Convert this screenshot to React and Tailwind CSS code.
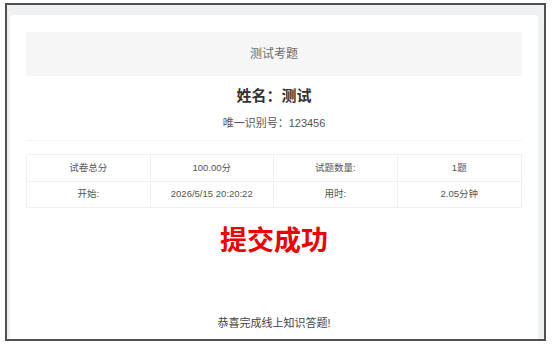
import React from 'react';

const rows = [
  ['试卷总分', '100.00分', '试题数量:', '1题'],
  ['开始:', '2026/5/15 20:20:22', '用时:', '2.05分钟'],
];

const App = () => {
  return (
    <div
      className="w-[553px] h-[346px] bg-white pt-[3px] pl-[5px] overflow-hidden"
      style={{ fontFamily: '"Liberation Sans", "Noto Sans CJK SC", sans-serif' }}
    >
      <div className="w-[541px] h-[338px] border-2 border-[#505050] bg-[#eef0f2] pt-[10px] pl-[3px] pr-[6px] flex">
        <div className="flex-1 bg-white rounded-t-[3px] pt-[17px] px-[16px] flex flex-col">
          {/* title bar */}
          <div className="h-[44px] bg-[#f6f6f6] flex items-center justify-center text-[12px] text-[#6b6b6b]">
            测试考题
          </div>

          <div className="mt-[10px] h-[20px] flex items-center justify-center text-[15px] font-bold text-[#333]">
            姓名：测试
          </div>
          <div className="mt-[9px] h-[16px] flex items-center justify-center text-[11px] text-[#555]">
            唯一识别号：123456
          </div>

          <div className="mt-[9px] border-t border-[#f4f4f4]" />

          {/* summary table */}
          <div className="mt-[13px] grid grid-cols-4 border border-[#f0f0f0] text-[9.5px] text-[#555]">
            {rows.map((row, i) =>
              row.map((cell, j) => (
                <div
                  key={`${i}-${j}`}
                  className={`flex items-center justify-center ${i === 0 ? 'h-[27px] border-b border-[#f0f0f0]' : 'h-[25px]'} ${j < 3 ? 'border-r border-[#f0f0f0]' : ''}`}
                >
                  {cell}
                </div>
              ))
            )}
          </div>

          <div className="mt-[16px] h-[34px] flex items-center justify-center text-[27px] font-bold text-[#f00000]">
            提交成功
          </div>

          <div className="mt-[57px] h-[16px] flex items-center justify-center text-[11px] text-[#444]">
            恭喜完成线上知识答题!
          </div>
        </div>
      </div>
    </div>
  );
};

export default App;
